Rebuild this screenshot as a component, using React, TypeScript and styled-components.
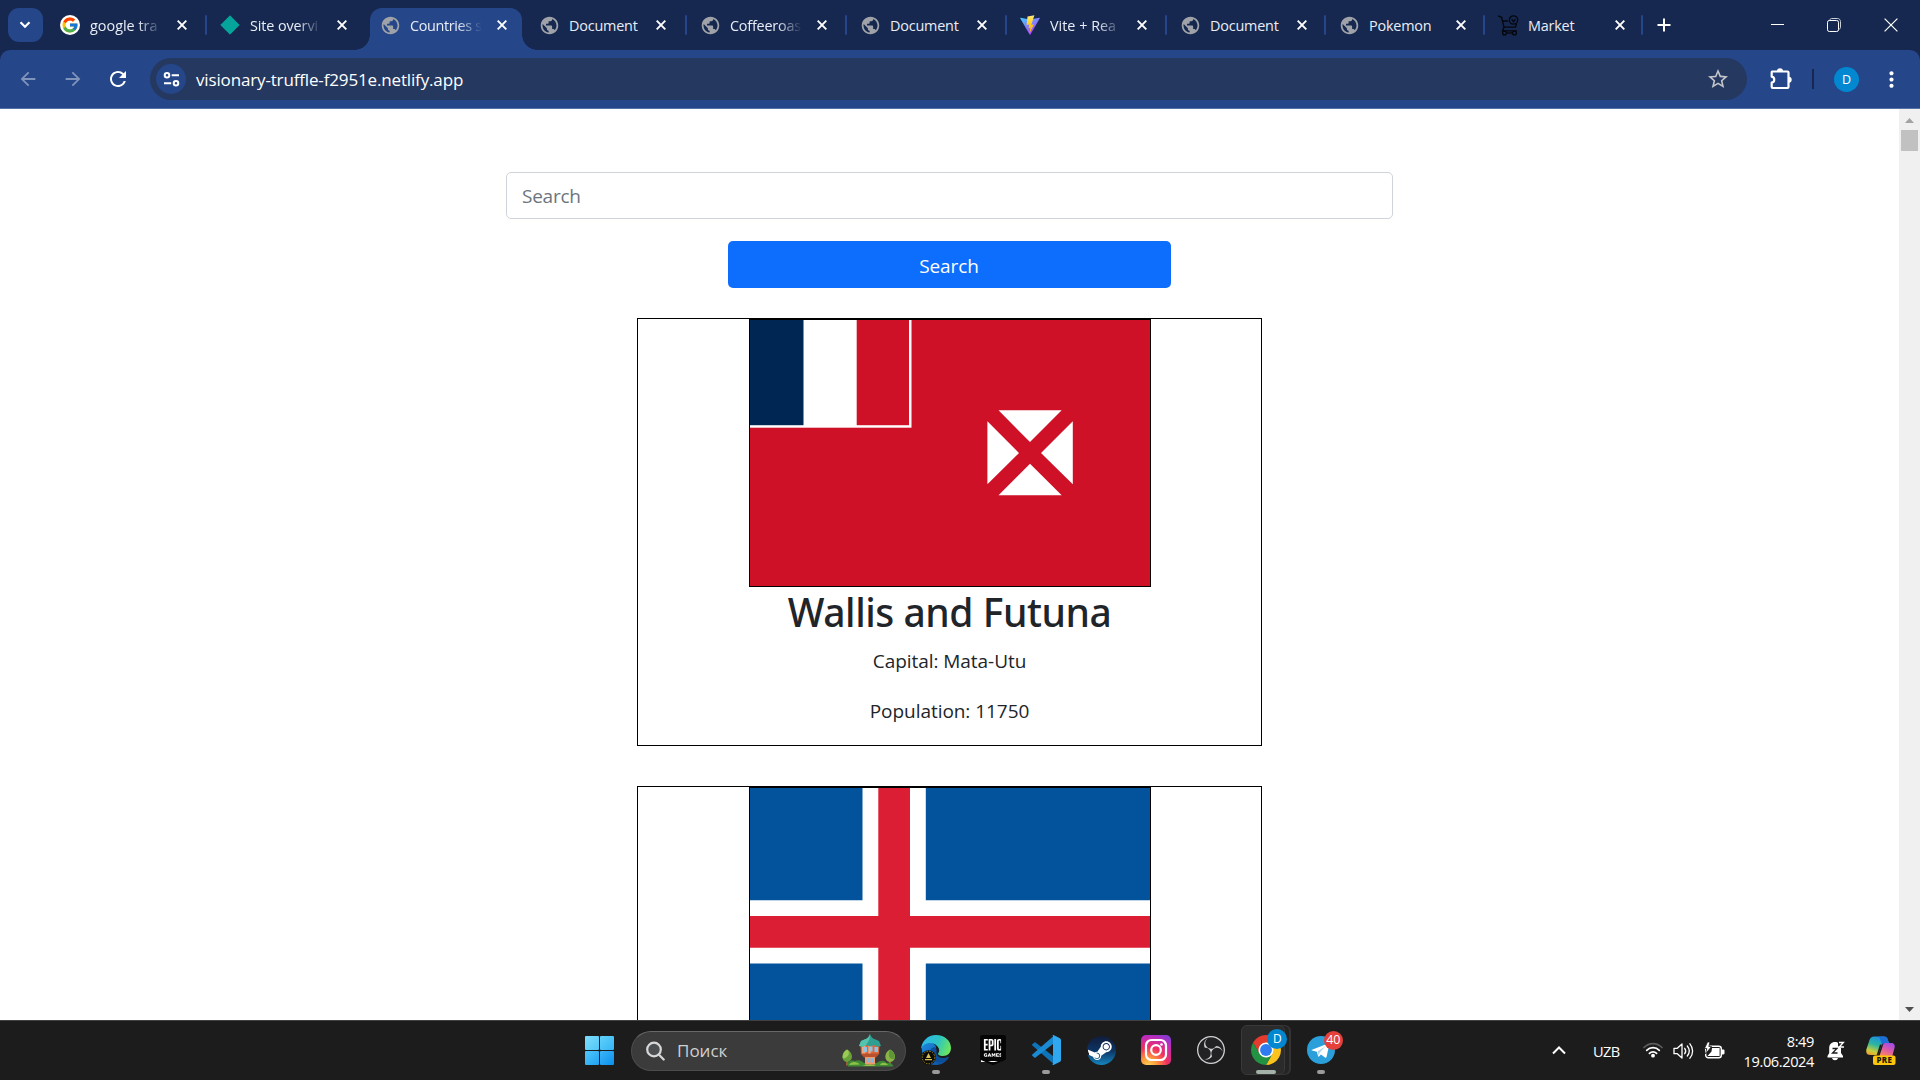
import React from "react";
import styled, { createGlobalStyle, css } from "styled-components";
import {
  MdArrowBack,
  MdArrowForward,
  MdMoreVert,
  MdPublic,
  MdRefresh,
  MdStarBorder,
} from "react-icons/md";
import { FcGoogle } from "react-icons/fc";
import { SiEpicgames, SiObsstudio, SiSteam } from "react-icons/si";

const c = {
  frame: "#16284f",
  bar: "#254689",
  field: "#253860",
  text: "#e9edf6",
  task: "#1c1c1c",
};

const GlobalStyle = createGlobalStyle`
  * { box-sizing: border-box; }
  html, body { margin: 0; padding: 0; overflow: hidden; }
  body { font-family: "Open Sans", "Noto Sans", sans-serif; background: #fff; }
  svg { display: block; flex: none; }
`;

const Screen = styled.div`
  width: 1920px;
  height: 1080px;
  display: flex;
  flex-direction: column;
  overflow: hidden;
`;

/* ---------- browser chrome ---------- */

const TabStrip = styled.header`
  height: 50px;
  flex: none;
  display: flex;
  align-items: stretch;
  background: ${c.frame};
  padding-left: 8px;
`;

const TabSearch = styled.button`
  width: 35px;
  height: 34px;
  margin: 8px 3px 0 0;
  padding: 0 1px 0 0;
  border: 0;
  border-radius: 11px;
  background: ${c.bar};
  display: grid;
  place-items: center;
`;

const Tab = styled.div<{ $w: number; $active?: boolean; $pad: number }>`
  width: ${(p) => p.$w}px;
  height: 42px;
  margin-top: 8px;
  flex: none;
  position: relative;
  display: flex;
  align-items: center;
  padding: 0 0 8px ${(p) => p.$pad}px;
  ${(p) =>
    p.$active &&
    css`
      background: ${c.bar};
      border-radius: 12px 12px 0 0;
      &::before,
      &::after {
        content: "";
        position: absolute;
        bottom: 0;
        width: 15px;
        height: 15px;
      }
      &::before {
        left: -15px;
        background: radial-gradient(circle at 0 0, transparent 14.5px, ${c.bar} 15px);
      }
      &::after {
        right: -15px;
        background: radial-gradient(circle at 100% 0, transparent 14.5px, ${c.bar} 15px);
      }
    `}
`;

const Favicon = styled.span`
  width: 20px;
  height: 20px;
  flex: none;
  display: grid;
  place-items: center;
`;

const GoogleBadge = styled.span`
  width: 20px;
  height: 20px;
  border-radius: 50%;
  background: #fff;
  display: grid;
  place-items: center;
`;

const TabTitle = styled.span<{ $fade?: boolean; $ls?: number }>`
  width: 72px;
  margin: 2px 0 0 10px;
  flex: none;
  white-space: nowrap;
  font-size: 14.4px;
  line-height: 20px;
  letter-spacing: ${(p) => p.$ls ?? -0.2}px;
  color: ${c.text};
  ${(p) =>
    p.$fade &&
    css`
      mask-image: linear-gradient(90deg, #000 66%, transparent 100%);
    `}
`;

const TabClose = styled.span`
  width: 20px;
  height: 20px;
  margin-left: 10px;
  display: grid;
  place-items: center;
`;

const Separator = styled.i`
  width: 2px;
  height: 20px;
  margin-top: 15px;
  flex: none;
  border-radius: 1px;
  background: ${c.bar};
`;

const NewTab = styled.span`
  width: 20px;
  margin: 0 0 0 11px;
  display: grid;
  place-items: center;
`;

const WindowControls = styled.div`
  margin-left: auto;
  display: flex;
`;

const WindowButton = styled.span<{ $w: number }>`
  width: ${(p) => p.$w}px;
  height: 49px;
  display: grid;
  place-items: center;
`;

const ToolbarBack = styled.div`
  background: ${c.frame};
  height: 59px;
  flex: none;
`;

const Toolbar = styled.nav`
  height: 59px;
  background: ${c.bar};
  border-radius: 10px 10px 0 0;
  border-bottom: 1px solid #5472a8;
  display: flex;
  align-items: center;
  padding: 0 0 0 5px;
`;

const NavButton = styled.span<{ $dim?: boolean }>`
  width: 45px;
  display: grid;
  place-items: center;
  color: ${(p) => (p.$dim ? "#8093bb" : "#fff")};
`;

const Address = styled.div`
  width: 1597px;
  height: 42px;
  margin-left: 10px;
  flex: none;
  border-radius: 21px;
  background: ${c.field};
  display: flex;
  align-items: center;
  padding: 0 17px 0 6px;
`;

const SiteInfo = styled.span`
  width: 30px;
  height: 30px;
  border-radius: 50%;
  background: ${c.bar};
  display: grid;
  place-items: center;
`;

const Url = styled.span`
  margin: 1px 0 0 10px;
  flex: 1;
  font-size: 17px;
  line-height: 24px;
  letter-spacing: -0.15px;
  color: #fff;
`;

const ToolbarEnd = styled.div`
  flex: 1;
  height: 42px;
  display: flex;
  align-items: center;
  padding-left: 23px;
  color: #fff;
`;

const ToolbarDivider = styled.i`
  width: 2px;
  height: 20px;
  margin-left: 20px;
  background: ${c.frame};
`;

const Avatar = styled.span`
  width: 25px;
  height: 25px;
  margin: 0 33px 0 20px;
  border-radius: 50%;
  background: #0288d1;
  display: grid;
  place-items: center;
  font-size: 12.5px;
  line-height: 25px;
`;

/* ---------- page ---------- */

const Viewport = styled.div`
  height: 911px;
  flex: none;
  display: flex;
  overflow: hidden;
`;

const Page = styled.main`
  width: 1899px;
  height: 911px;
  overflow: hidden;
  display: flex;
  flex-direction: column;
  align-items: center;
  padding-top: 63px;
  color: #212529;
`;

const SearchInput = styled.input`
  width: 887px;
  height: 47px;
  flex: none;
  border: 1px solid #ced4da;
  border-radius: 5px;
  padding: 2px 15px 1px;
  font: 19px "Open Sans", sans-serif;
  letter-spacing: -0.25px;
  background: #fff;
  outline: none;
  &::placeholder {
    color: #6c757d;
    opacity: 1;
  }
`;

const SearchButton = styled.button`
  width: 443px;
  height: 47px;
  flex: none;
  margin: 22px 0 30px;
  border: 0;
  border-radius: 5px;
  background: #0d6efd;
  color: #fff;
  padding: 2px 1px 0 0;
  font: 19px "Open Sans", sans-serif;
  letter-spacing: -0.1px;
`;

const Card = styled.article`
  width: 625px;
  height: 428px;
  flex: none;
  margin-bottom: 40px;
  border: 1px solid #000;
  display: flex;
  flex-direction: column;
  align-items: center;
`;

const FlagFrame = styled.div`
  width: 402px;
  height: 268px;
  flex: none;
  border: 1px solid #000;
`;

const CountryName = styled.h1`
  margin: 1px 0 10px;
  font-family: "Noto Sans", sans-serif;
  font-size: 39px;
  font-weight: 500;
  line-height: 48px;
  letter-spacing: -0.45px;
`;

const Fact = styled.p`
  margin: 0 0 20px;
  font-size: 19px;
  line-height: 30px;
  letter-spacing: -0.05px;
`;

const Scrollbar = styled.aside`
  width: 21px;
  background: #f0f0f0;
  display: flex;
  flex-direction: column;
  align-items: center;
  padding: 9px 0 8px;
`;

const Thumb = styled.i`
  width: 17px;
  height: 21px;
  margin: 7px 0 auto;
  background: #c1c1c1;
`;

/* ---------- taskbar ---------- */

const Taskbar = styled.footer`
  height: 60px;
  flex: none;
  background: ${c.task};
  border-top: 1px solid #404040;
  display: flex;
  align-items: center;
  padding: 0 24px 0 585px;
  color: #fff;
`;

const StartLogo = styled.span`
  width: 29px;
  height: 29px;
  display: grid;
  grid-template-columns: 14px 14px;
  grid-template-rows: 14px 14px;
  gap: 1px;
`;

const Pane = styled.i<{ $from: string; $to: string }>`
  border-radius: 1px;
  background: linear-gradient(135deg, ${(p) => p.$from}, ${(p) => p.$to});
`;

const TaskSearch = styled.div`
  width: 275px;
  height: 40px;
  margin: 0 3px 0 17px;
  border: 1px solid #4c4c4c;
  border-top-color: #686868;
  border-radius: 20px;
  background: #3b3b3b;
  display: flex;
  align-items: center;
  padding: 0 10px 0 14px;
  font-size: 17px;
  color: #d0d0d0;
`;

const TaskSearchLabel = styled.span`
  margin-left: 12px;
  flex: 1;
`;

const TaskApp = styled.div`
  width: 54.9px;
  height: 59px;
  flex: none;
  display: flex;
  flex-direction: column;
  align-items: center;
  padding-top: 4px;
`;

const AppTile = styled.div<{ $active?: boolean }>`
  width: 50px;
  height: 50px;
  position: relative;
  display: grid;
  place-items: center;
  ${(p) =>
    p.$active &&
    css`
      width: 44px;
      padding-left: 5px;
      border-radius: 6px;
      background: #2b2b2b;
      border: 1px solid #393939;
      box-shadow: 5px 0 0 -1px #242424, 6px 0 0 0 #333;
      margin-left: -5px;
    `}
`;

const Indicator = styled.i<{ $wide?: boolean }>`
  width: ${(p) => (p.$wide ? 20 : 8)}px;
  height: 4px;
  margin-top: -5px;
  border-radius: 2px;
  background: ${(p) => (p.$wide ? "#a4b1a8" : "#9a9a9a")};
  position: relative;
`;

const Badge = styled.span<{ $bg: string; $size: number; $top: number; $right: number; $fs: number }>`
  position: absolute;
  top: ${(p) => p.$top}px;
  right: ${(p) => p.$right}px;
  width: ${(p) => p.$size}px;
  height: ${(p) => p.$size}px;
  border-radius: 50%;
  background: ${(p) => p.$bg};
  display: grid;
  place-items: center;
  font-size: ${(p) => p.$fs}px;
  line-height: 1;
  letter-spacing: -0.3px;
`;

const Disc = styled.span<{ $size: number; $bg: string }>`
  width: ${(p) => p.$size}px;
  height: ${(p) => p.$size}px;
  border-radius: 50%;
  background: ${(p) => p.$bg};
  display: grid;
  place-items: center;
`;

const EpicShield = styled.span`
  width: 26px;
  height: 30px;
  display: grid;
  place-items: center;
  background: linear-gradient(#fff, #fff) center 3px / 20px 24px no-repeat;
`;

const Tray = styled.div`
  margin-left: auto;
  display: flex;
  align-items: center;
`;

const Lang = styled.span`
  margin: 1px 22px 0 27px;
  width: 28px;
  font-size: 14.6px;
  letter-spacing: -0.6px;
`;

const StatusIcons = styled.span`
  display: flex;
  gap: 10px;
`;

const Clock = styled.div`
  width: 89px;
  margin-right: 13px;
  text-align: right;
  font-size: 14.6px;
  line-height: 20px;
  letter-spacing: -0.4px;
`;

const BellSlot = styled.span`
  margin-right: 21px;
`;

/* ---------- drawings ---------- */

const Cross = () => (
  <svg width="10" height="10" viewBox="0 0 10 10" stroke="#fff" strokeWidth="1.9">
    <path d="M.7.7l8.6 8.6M9.3.7L.7 9.3" />
  </svg>
);

const Globe = () => <MdPublic size={21} color="#9fa3a9" />;

const NetlifyMark = () => (
  <svg width="20" height="20" viewBox="0 0 20 20">
    <path d="M10 .8L19.2 10 10 19.2.8 10z" fill="#05a59c" stroke="#05a59c" strokeLinejoin="round" />
  </svg>
);

const ViteMark = () => (
  <svg width="20" height="20" viewBox="0 0 20 20">
    <defs>
      <linearGradient id="viteA" x1="0" y1="0" x2=".7" y2="1">
        <stop offset="0" stopColor="#41d1ff" />
        <stop offset="1" stopColor="#bd34fe" />
      </linearGradient>
      <linearGradient id="viteB" x1="0" y1="0" x2="0" y2="1">
        <stop offset="0" stopColor="#ffea83" />
        <stop offset=".4" stopColor="#ffd324" />
        <stop offset="1" stopColor="#ffa800" />
      </linearGradient>
    </defs>
    <path d="M.5 2.7L10 4.6l9.500-1.9c.4 0 .4.3.3.6L10.400 19.600c-.2.3-.6.3-.8 0L.2 3.300c-.1-.3 0-.6.3-.6z" fill="url(#viteA)" />
    <path d="M14.400.2L7.500 1.500l-.9 8.600 2.700-.5-.8 3.700 1.900-.5-1 5.600 4.400-9-2.500.4z" fill="url(#viteB)" />
  </svg>
);

const CartMark = () => (
  <svg width="21" height="21" viewBox="0 0 21 21" fill="none" stroke="#04060c" strokeWidth="1.3">
    <path d="M0 .8l3.600 1.500 2.400 9.800-1.500 3.700h14.500M6 12.100h11.500l1-3.400M5 6h5" />
    <circle cx="15.500" cy="5" r="4.200" />
    <path d="M13.600 4.200l1.900 2.400 2-2.400" />
    <circle cx="6.500" cy="18" r="1.900" />
    <circle cx="16.500" cy="18" r="1.900" />
    <path d="M8.400 18h6.200" />
  </svg>
);

const TuneIcon = () => (
  <svg width="17" height="17" viewBox="0 0 17 17" fill="none" stroke="#fff" strokeWidth="2">
    <circle cx="4" cy="4.300" r="2.300" />
    <path d="M8.700 4.300H16M1 12.300h7.200" />
    <circle cx="13" cy="12.300" r="2.300" />
  </svg>
);

const ExtensionIcon = () => (
  <svg width="22" height="22" viewBox="0 0 22 22">
    <path
      d="M2.200 3.500h15.300a1 1 0 0 1 1 1v14.500a1 1 0 0 1-1 1H2.700a1 1 0 0 1-1-1v-4.300c3.400-.6 3.400-5.400 0-6V4.200z"
      fill="none"
      stroke="#fff"
      strokeWidth="2.200"
      strokeLinejoin="round"
    />
    <path d="M7 3.200a3 3 0 0 1 6 0zM18.700 8.700a3 3 0 0 1 0 6z" fill="#fff" />
  </svg>
);

const WallisFlag = () => (
  <svg width="400" height="266" viewBox="0 0 400 266">
    <rect width="400" height="266" fill="#ce1126" />
    <rect width="161.500" height="107.700" fill="#fff" />
    <rect width="53.500" height="105.200" fill="#002654" />
    <rect x="106.700" width="52.300" height="105.200" fill="#ce1126" />
    <path
      fill="#fff"
      d="M248.500 90.300h63.200L280 122zM248.500 175.300h63.200L280 143.700zM237.400 101.200v63L269 133zM322.800 101.200v63L291 133z"
    />
  </svg>
);

const IcelandFlag = () => (
  <svg width="400" height="266" viewBox="0 0 400 266">
    <rect width="400" height="266" fill="#02529c" />
    <path d="M112.500 0h63.300v266h-63.300zM0 112.300h400v63.200H0z" fill="#fff" />
    <path d="M128.300 0H160v266h-31.700zM0 128h400v31.800H0z" fill="#dc1e35" />
  </svg>
);

const SearchGlass = () => (
  <svg width="19" height="20" viewBox="0 0 19 20" fill="none" stroke="#d8d8d8" strokeWidth="2.200" strokeLinecap="round">
    <circle cx="8" cy="8.500" r="6.800" fill="#4c5052" />
    <path d="M13 13.700l4.700 4.800" />
  </svg>
);

const Treehouse = () => (
  <svg width="53" height="34" viewBox="0 0 53 34">
    <path d="M5 22v9.500M48 22v9.500" stroke="#a5643a" strokeWidth="1.800" />
    <path d="M5 15.500c4 2 6 6 4.500 9.500-2 4-7 4-8.700 0C-.7 21 1.800 17 5 15.500z" fill="#69a03a" />
    <path d="M5 15.500C2 17.500.5 20 .8 24c2 1 5-1 6-4 .5-2-.3-3.500-1.800-4.500z" fill="#9ac955" />
    <path d="M48 15.500c4 2 6 6 4.500 9.500-2 4-7 4-8.700 0-1.500-4 1-8 4.200-9.500z" fill="#8ab546" />
    <path d="M48 15.500c3.500 2 5 5 4.700 8.500-2 2-5 1-5.700-2-.4-2 0-4.500 1-6.500z" fill="#5e9638" />
    <path d="M6 32.500c-2-4 3-7 7-5.500 3.500-2 7 0 9 2 6-1 10-1 13 0 3-3 8-3 9.500 0 4-1 6 1 7 3.500z" fill="#3f8a35" />
    <path d="M7 31c2-4 8-4 11-.5zM38 31c1-3 6-3 8 0zM20 32c5-2 10-2 14 0z" fill="#8fbf45" />
    <path d="M18.500 10h19L37 20H19z" fill="#d9683c" />
    <path d="M20 11h3.500v9H20zM26.300 11h2.500v9h-2.500z" fill="#f3a67a" />
    <path d="M21 13h4v5h-4zM27 12.500h3.500v5H27zM32.500 13h3.500v5h-3.500z" fill="#8ec3e6" />
    <path d="M18.500 19.500h19l-3.500 4H22z" fill="#b9512d" />
    <path d="M23 23h10v7.500H23z" fill="#ee9a6b" />
    <path d="M24.800 24h2.700v4.500h-2.700zM28.700 24h2.700v4.500h-2.700z" fill="#7fb9e4" />
    <path d="M28 0c1 3 2.500 4.500 5.500 5.500L37 7l2 5-3.500.8L32 11l-4 1.500L24 11l-3.500 1.800L17 12l2-5 3.500-1.500C25.500 4.500 27 3 28 0z" fill="#2f9f93" />
    <path d="M28 0c.3 4-1.500 8-4 11l-3.500 1.800L17 12l2-5 3.500-1.500C25.500 4.500 27 3 28 0z" fill="#55c4ae" />
  </svg>
);

const EdgeLogo = () => (
  <svg width="32" height="32" viewBox="0 0 32 32">
    <defs>
      <linearGradient id="edgeG" x1="0" y1=".2" x2="1" y2=".5">
        <stop offset="0" stopColor="#30b6ee" />
        <stop offset=".55" stopColor="#2cc4c4" />
        <stop offset="1" stopColor="#6be45f" />
      </linearGradient>
      <linearGradient id="edgeB" x1="0" y1="0" x2="1" y2="1">
        <stop offset="0" stopColor="#1d8be0" />
        <stop offset="1" stopColor="#0c4a96" />
      </linearGradient>
    </defs>
    <path d="M2 13c3-7 13-6 14 .5-3 3-2.500 8 2 10 4 2 8 .5 11-.7C26 29 20 31.500 14 31 7 30 1 24 2 13z" fill="url(#edgeB)" />
    <path d="M11 15c4-4 6 0 5.500 3-.3 5 6 8 12.500 4.800C25 29 17 31 12 25c-2-3-3-7-1-10z" fill="#0d4e9b" />
    <path
      d="M1 16C1.300 7 8 1 16 1c9 0 15 6 15 13 0 5-3.500 8-8 8-3.500 0-5.500-1.500-4.800-2.700 1.300-1.500 1.200-3.300.5-5C17 10.500 13 8.700 9 9c-4 .3-7 3-8 7z"
      fill="url(#edgeG)"
    />
    <circle cx="8.500" cy="23.500" r="7.300" fill="#0b0b0a" />
    <circle cx="8.500" cy="23.500" r="6.300" fill="none" stroke="#a98f25" strokeDasharray="1.500 1.200" />
    <path d="M8.500 19l2.500 5H6zM5 25h7v1.300H5z" fill="#d8bf52" />
  </svg>
);

const EpicLogo = () => (
  <EpicShield>
    <SiEpicgames size={30} color="#050505" />
  </EpicShield>
);

const CodeLogo = () => (
  <svg width="30" height="30" viewBox="0 0 30 30">
    <path d="M1.300 9.300l2-1.700c.4-.3.9-.3 1.300 0L22 21v7.500L1.300 10.500c-.4-.3-.4-.9 0-1.200z" fill="#0f73b8" />
    <path d="M1.300 20.700l2 1.700c.4.300.9.300 1.300 0L22 9V1.500L1.300 19.500c-.4.300-.4.900 0 1.200z" fill="#1a8ad2" />
    <path d="M22.500 0l6 2.900c.9.400 1.500 1.300 1.500 2.300v19.600c0 1-.6 1.900-1.500 2.300l-6 2.900c-.8.300-1.700.1-2.300-.5.900.8 1.800.3 1.800-1V1.500c0-1.300-.9-1.800-1.800-1 .6-.6 1.500-.8 2.300-.5z" fill="#2fa8f0" />
  </svg>
);

const SteamShape = styled(SiSteam)`
  path {
    fill: url(#steamG);
  }
`;

const SteamLogo = () => (
  <Disc $size={28} $bg="radial-gradient(circle, #fff 12.500px, transparent 13px)">
    <svg width="0" height="0">
      <defs>
        <linearGradient id="steamG" x1="0" y1="0" x2="0" y2="1">
          <stop offset="0" stopColor="#111c3b" />
          <stop offset=".5" stopColor="#0c3463" />
          <stop offset="1" stopColor="#1585bd" />
        </linearGradient>
      </defs>
    </svg>
    <SteamShape size={29} />
  </Disc>
);

const InstagramLogo = () => (
  <svg width="30" height="30" viewBox="0 0 30 30">
    <defs>
      <radialGradient id="igA" cx=".25" cy="1.050" r="1.150">
        <stop offset="0" stopColor="#ffd95a" />
        <stop offset=".25" stopColor="#fd9a3c" />
        <stop offset=".55" stopColor="#f02f60" />
        <stop offset=".85" stopColor="#c02bb8" />
        <stop offset="1" stopColor="#8a3ad2" />
      </radialGradient>
    </defs>
    <rect width="30" height="30" rx="5" fill="url(#igA)" />
    <g fill="none" stroke="#fff" strokeWidth="2.200">
      <rect x="5" y="5" width="20" height="20" rx="5.500" />
      <circle cx="15" cy="15" r="4.800" />
    </g>
    <circle cx="20.500" cy="9.500" r="1.300" fill="#fff" />
  </svg>
);

const ObsLogo = () => (
  <Disc $size={28} $bg="#222124">
    <SiObsstudio size={28} color="#d2d2d2" />
  </Disc>
);

const ChromeLogo = () => (
  <svg width="30" height="30" viewBox="0 0 48 48">
    <circle cx="24" cy="24" r="13" fill="#fff" />
    <path d="M24 12h20.780A24 24 0 0 0 3.220 12L13.610 30A12 12 0 0 1 24 12z" fill="#e33b2e" />
    <path d="M34.390 30L24 48A24 24 0 0 0 44.780 12H24A12 12 0 0 1 34.390 30z" fill="#fcc31e" />
    <path d="M13.610 30L3.220 12A24 24 0 0 0 24 48L34.390 30A12 12 0 0 1 13.610 30z" fill="#229342" />
    <circle cx="24" cy="24" r="9.500" fill="#2f7bf0" />
  </svg>
);

const TelegramLogo = () => (
  <svg width="28" height="28" viewBox="0 0 28 28">
    <circle cx="14" cy="14" r="14" fill="#2b9fd9" />
    <path d="M5 13.700l16-6.300c.9-.3 1.500.2 1.200 1.400l-2.600 12c-.2.900-.9 1.100-1.600.7l-4-3-2 2c-.3.300-.6.400-.9-.2l-1.300-4.600-4.700-1.300c-.8-.2-.8-.5-.1-.7z" fill="#fff" />
    <path d="M10.500 15.600l8.300-5.700-6.300 6.800-.7 3.300z" fill="#a9d4ec" />
  </svg>
);

const WifiIcon = () => (
  <svg width="20" height="16" viewBox="0 0 20 16" fill="none" strokeWidth="1.700" strokeLinecap="round">
    <path d="M1 5.500C6 .2 14 .2 19 5.500" stroke="#5c5c5c" />
    <path d="M3.700 8.400c3.500-3.600 9.100-3.600 12.600 0M6.400 11.300c2-2 5.200-2 7.200 0" stroke="#fff" />
    <circle cx="10" cy="13.700" r="1.900" fill="#fff" />
  </svg>
);

const VolumeIcon = () => (
  <svg width="21" height="18" viewBox="0 0 21 18" fill="none" stroke="#fff" strokeWidth="1.300" strokeLinecap="round">
    <path d="M1 6.300v5.400h3.300L9 16V2L4.300 6.300z" strokeLinejoin="round" />
    <path d="M11.700 6.300c1.200 1.600 1.200 3.800 0 5.400M14.300 4c2.400 3 2.400 7 0 10M16.900 1.800c3.600 4.300 3.600 10.100 0 14.400" />
  </svg>
);

const BatteryIcon = () => (
  <svg width="21" height="18" viewBox="0 0 21 18">
    <rect x="1.700" y="4.200" width="15.600" height="11.600" rx="2.500" fill="none" stroke="#fff" strokeWidth="1.400" />
    <path d="M8 6h7.600v8H3.500l4-4.500z" fill="#fff" />
    <path d="M18 7.500h1.200c.8 0 1.300.5 1.300 1.200v2.600c0 .7-.5 1.200-1.300 1.200H18z" fill="#fff" />
    <path d="M3.500 0L.5 6.500h2.300L1.500 12l6-7.500H4.800L6 0z" fill="#fff" stroke={c.task} strokeWidth=".8" />
  </svg>
);

const BellIcon = () => (
  <svg width="18" height="20" viewBox="0 0 18 20">
    <path d="M8 1C4.500 1 2.200 3.500 2.200 7v5L.5 15v1.500h15.500V15L14 12V7c0-3.500-2.500-6-6-6zM5 17h6c-.5 1.500-1.500 2.200-3 2.200S5.500 18.500 5 17z" fill="#fff" />
    <path d="M11 -1H18v8h-4.500L11 5z" fill={c.task} />
    <path d="M5.500 7.500h4.500l-4.500 4.500h5" fill="none" stroke={c.task} strokeWidth="1.300" />
    <path d="M12 1.500h4.300l-4 4.500h4.700" fill="none" stroke="#fff" strokeWidth="1.400" />
  </svg>
);

const CopilotLogo = () => (
  <svg width="30" height="29" viewBox="0 0 30 29">
    <defs>
      <linearGradient id="cpA" x1=".6" y1="0" x2=".2" y2="1">
        <stop offset="0" stopColor="#1b8de8" />
        <stop offset=".45" stopColor="#2bb5a0" />
        <stop offset=".8" stopColor="#c8cf3c" />
        <stop offset="1" stopColor="#f0a030" />
      </linearGradient>
      <linearGradient id="cpB" x1=".7" y1="0" x2=".2" y2="1">
        <stop offset="0" stopColor="#a24be8" />
        <stop offset=".5" stopColor="#dd5aa8" />
        <stop offset="1" stopColor="#fb8a5c" />
      </linearGradient>
    </defs>
    <path d="M8 .5h10c2 0 3.200 1.200 3.800 3L23 7h-4c-2 0-3 1-3.500 2.500L12 19H5c-4 0-5.500-2-4.500-6L3.500 4C4.300 1.700 5.700.5 8 .5z" fill="url(#cpA)" />
    <path d="M13 .5h5c2 0 3.200 1.200 3.800 3L23 7h-4c-1.500 0-2.300.6-3 1.500z" fill="#1d6fd8" />
    <path d="M19 7h6c3 0 4.300 2 3.500 5l-2.200 8H13.500L17 9c.4-1.200 1-2 2-2z" fill="url(#cpB)" />
    <path d="M15.800 8.800L12.300 19h-1.600l3.300-10.500z" fill={c.task} />
    <rect x="7" y="19.500" width="22.500" height="9.500" rx="2" fill="#fdc50b" />
    <text x="18.300" y="27" fontSize="8" fontWeight="800" textAnchor="middle" fill="#1b1500" fontFamily="Noto Sans" letterSpacing=".3">
      PRE
    </text>
  </svg>
);

/* ---------- data ---------- */

type TabInfo = {
  title: string;
  icon: React.ReactNode;
  w: number;
  pad: number;
  fade?: boolean;
  active?: boolean;
  sep?: boolean;
  ls?: number;
};

const tabs: TabInfo[] = [
  { title: "google tra", icon: <GoogleBadge><FcGoogle size={18} /></GoogleBadge>, w: 159, pad: 14, fade: true, sep: true, ls: 0 },
  { title: "Site overvi", icon: <NetlifyMark />, w: 163, pad: 13, fade: true, ls: -0.1 },
  { title: "Countries s", icon: <Globe />, w: 152, pad: 10, fade: true, active: true, ls: -0.35 },
  { title: "Document", icon: <Globe />, w: 163, pad: 17, sep: true },
  { title: "Coffeeroas", icon: <Globe />, w: 158, pad: 13, fade: true, sep: true },
  { title: "Document", icon: <Globe />, w: 158, pad: 13, sep: true },
  { title: "Vite + Rea", icon: <ViteMark />, w: 158, pad: 13, fade: true, sep: true, ls: 0 },
  { title: "Document", icon: <Globe />, w: 157, pad: 13, sep: true },
  { title: "Pokemon", icon: <Globe />, w: 157, pad: 13, sep: true },
  { title: "Market", icon: <CartMark />, w: 156, pad: 13, sep: true },
];

const countries = [
  { name: "Wallis and Futuna", capital: "Mata-Utu", population: 11750, flag: <WallisFlag /> },
  { flag: <IcelandFlag /> },
];

const apps: { icon: React.ReactNode; open?: boolean; active?: boolean; badge?: React.ReactNode }[] = [
  { icon: <EdgeLogo />, open: true },
  { icon: <EpicLogo /> },
  { icon: <CodeLogo />, open: true },
  { icon: <SteamLogo /> },
  { icon: <InstagramLogo /> },
  { icon: <ObsLogo /> },
  {
    icon: <ChromeLogo />,
    open: true,
    active: true,
    badge: <Badge $bg="#0288d1" $size={20} $top={3} $right={-3} $fs={12}>D</Badge>,
  },
  {
    icon: <TelegramLogo />,
    open: true,
    badge: <Badge $bg="#e5403a" $size={19} $top={6} $right={3} $fs={12.5}>40</Badge>,
  },
];

export default function App() {
  return (
    <Screen>
      <GlobalStyle />
      <TabStrip>
        <TabSearch>
          <svg width="12" height="8" viewBox="0 0 12 8" fill="none" stroke="#fff" strokeWidth="2.200">
            <path d="M1.500 1.200L6 5.700l4.500-4.500" />
          </svg>
        </TabSearch>
        {tabs.map((t, i) => (
          <React.Fragment key={i}>
            <Tab $w={t.w} $pad={t.pad} $active={t.active}>
              <Favicon>{t.icon}</Favicon>
              <TabTitle $fade={t.fade} $ls={t.ls}>{t.title}</TabTitle>
              <TabClose><Cross /></TabClose>
            </Tab>
            {t.sep && <Separator />}
          </React.Fragment>
        ))}
        <NewTab>
          <svg width="14" height="14" viewBox="0 0 14 14" stroke="#fff" strokeWidth="2">
            <path d="M7 .5v13M.5 7h13" />
          </svg>
        </NewTab>
        <WindowControls>
          <WindowButton $w={56}>
            <svg width="13" height="13" viewBox="0 0 13 13"><path d="M0 6h13v1H0z" fill="#fff" /></svg>
          </WindowButton>
          <WindowButton $w={57}>
            <svg width="14" height="14" viewBox="0 0 14 14" fill="none" stroke="#fff">
              <path d="M3 2.500V1.800C3 1 3.700.5 4.500.5h6c1.700 0 3 1.300 3 3v6c0 .8-.5 1.500-1.300 1.500h-.7" stroke="#c9cfdb" />
              <rect x=".5" y="2.500" width="11" height="11" rx="1.800" />
            </svg>
          </WindowButton>
          <WindowButton $w={58}>
            <svg width="14" height="14" viewBox="0 0 14 14" stroke="#fff" strokeWidth="1.200"><path d="M.6.6l12.800 12.800M13.400.6L.6 13.400" /></svg>
          </WindowButton>
        </WindowControls>
      </TabStrip>
      <ToolbarBack>
        <Toolbar>
          <NavButton $dim><MdArrowBack size={22} /></NavButton>
          <NavButton $dim><MdArrowForward size={22} /></NavButton>
          <NavButton><MdRefresh size={24} /></NavButton>
          <Address>
            <SiteInfo><TuneIcon /></SiteInfo>
            <Url>visionary-truffle-f2951e.netlify.app</Url>
            <MdStarBorder size={24} color="#c4c5c9" />
          </Address>
          <ToolbarEnd>
            <ExtensionIcon />
            <ToolbarDivider />
            <Avatar>D</Avatar>
            <MdMoreVert size={25} style={{ marginLeft: -13 }} />
          </ToolbarEnd>
        </Toolbar>
      </ToolbarBack>
      <Viewport>
        <Page>
          <SearchInput placeholder="Search" />
          <SearchButton>Search</SearchButton>
          {countries.map((k, i) => (
            <Card key={i}>
              <FlagFrame>{k.flag}</FlagFrame>
              {k.name && (
                <>
                  <CountryName>{k.name}</CountryName>
                  <Fact>Capital: {k.capital}</Fact>
                  <Fact>Population: {k.population}</Fact>
                </>
              )}
            </Card>
          ))}
        </Page>
        <Scrollbar>
          <svg width="9" height="5" viewBox="0 0 9 5"><path d="M4.500 0L9 5H0z" fill="#a3a3a3" /></svg>
          <Thumb />
          <svg width="9" height="5" viewBox="0 0 9 5"><path d="M4.500 5L9 0H0z" fill="#505050" /></svg>
        </Scrollbar>
      </Viewport>
      <Taskbar>
        <StartLogo>
          <Pane $from="#7fdcfb" $to="#4fc7f7" />
          <Pane $from="#62d2fa" $to="#35b4f5" />
          <Pane $from="#52c6f9" $to="#1fa3f3" />
          <Pane $from="#3db5f7" $to="#0a90ee" />
        </StartLogo>
        <TaskSearch>
          <SearchGlass />
          <TaskSearchLabel>Поиск</TaskSearchLabel>
          <Treehouse />
        </TaskSearch>
        {apps.map((a, i) => (
          <TaskApp key={i}>
            <AppTile $active={a.active}>
              {a.icon}
              {a.badge}
            </AppTile>
            {a.open && <Indicator $wide={a.active} />}
          </TaskApp>
        ))}
        <Tray>
          <svg width="14" height="9" viewBox="0 0 14 9" fill="none" stroke="#fff" strokeWidth="2">
            <path d="M1 7.500l6-6 6 6" />
          </svg>
          <Lang>UZB</Lang>
          <StatusIcons>
            <WifiIcon />
            <VolumeIcon />
            <BatteryIcon />
          </StatusIcons>
          <Clock>
            <div>8:49</div>
            <div>19.06.2024</div>
          </Clock>
          <BellSlot><BellIcon /></BellSlot>
          <CopilotLogo />
        </Tray>
      </Taskbar>
    </Screen>
  );
}
